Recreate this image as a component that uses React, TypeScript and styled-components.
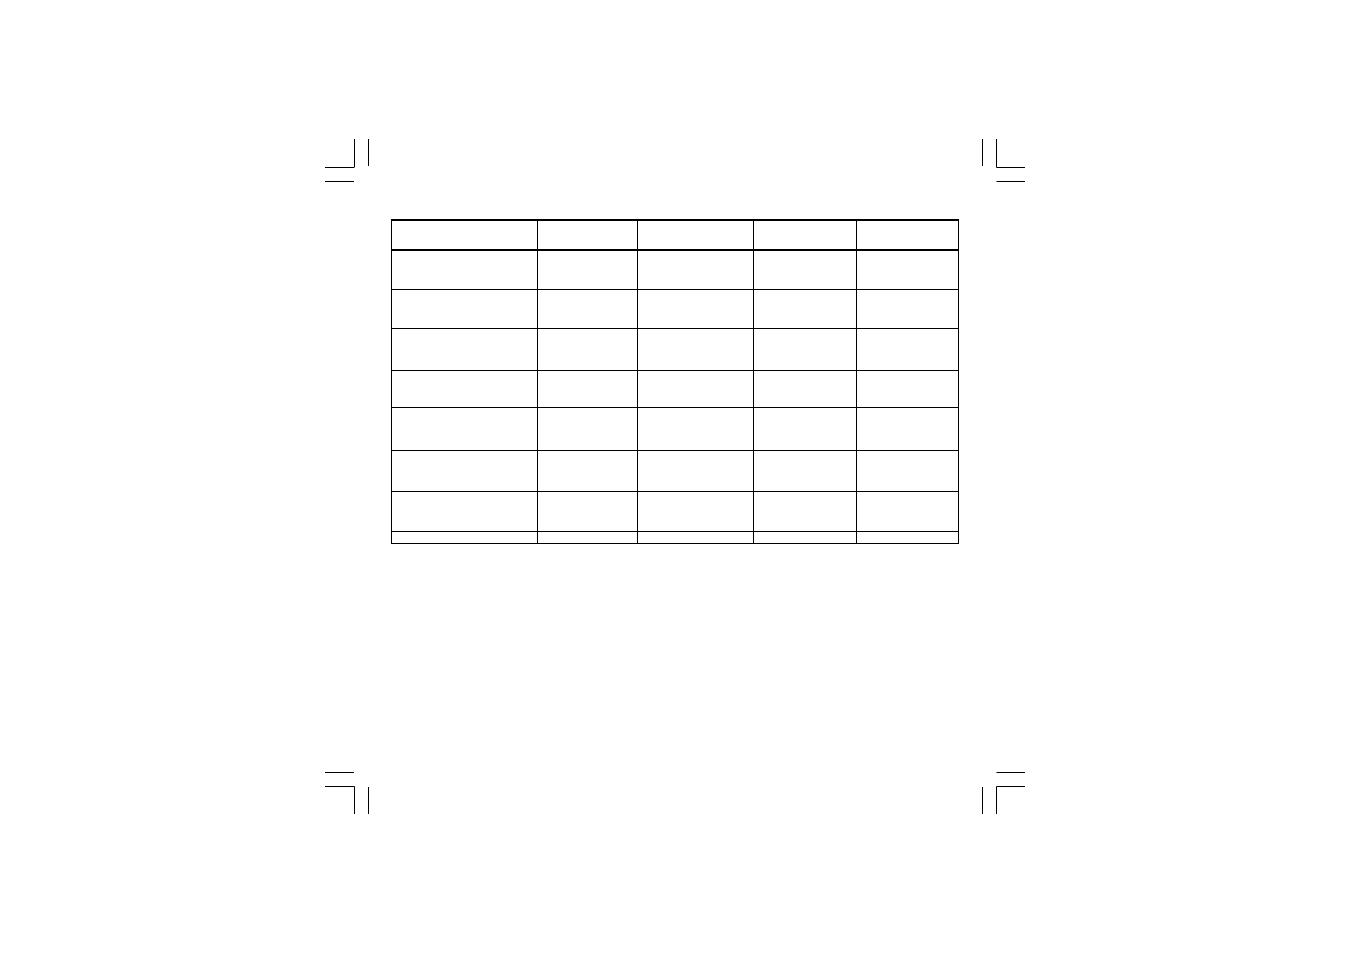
import React from 'react';
import styled, { createGlobalStyle } from 'styled-components';

const GlobalStyle = createGlobalStyle`
  html, body {
    margin: 0;
    padding: 0;
    background: #fff;
    font-family: "Liberation Sans", Arial, sans-serif;
  }
`;

const columns = [146, 100, 116, 103, 102];
const rowHeights = [39, 39, 42, 37, 43, 41, 40, 12];

type Corner = 'tl' | 'tr' | 'bl' | 'br';

// line segments of each crop mark, inside a 46x45 box
const marks: Record<Corner, number[][]> = {
  tl: [
    [1, 29.5, 30, 29.5],
    [30.5, 1, 30.5, 29.5],
    [44.5, 1, 44.5, 28],
    [1, 43.5, 30, 43.5],
  ],
  tr: [
    [1.5, 1, 1.5, 28],
    [15.5, 1, 15.5, 29.5],
    [15.5, 29.5, 44, 29.5],
    [15.5, 43.5, 44, 43.5],
  ],
  bl: [
    [1, 1.5, 30, 1.5],
    [1, 15.5, 30.5, 15.5],
    [30.5, 15.5, 30.5, 43],
    [44.5, 16, 44.5, 43],
  ],
  br: [
    [15.5, 1.5, 44, 1.5],
    [15.5, 15.5, 44, 15.5],
    [15.5, 15.5, 15.5, 43],
    [1.5, 16, 1.5, 43],
  ],
};

const CropMark = ({ corner }: { corner: Corner }) => (
  <MarkSvg width="46" height="45" viewBox="0 0 46 45">
    {marks[corner].map(([x1, y1, x2, y2], i) => (
      <line key={i} x1={x1} y1={y1} x2={x2} y2={y2} stroke="#000" strokeWidth="1" />
    ))}
  </MarkSvg>
);

const App = () => (
  <Page>
    <GlobalStyle />
    <Frame>
      <MarkRow>
        <CropMark corner="tl" />
        <CropMark corner="tr" />
      </MarkRow>
      <Body>
        <Grid>
          <colgroup>
            {columns.map((w, i) => (
              <col key={i} style={{ width: w }} />
            ))}
          </colgroup>
          <thead>
            <tr>
              {columns.map((_, i) => (
                <HeadCell key={i} />
              ))}
            </tr>
          </thead>
          <tbody>
            {rowHeights.map((h, r) => (
              <tr key={r} style={{ height: h }}>
                {columns.map((_, c) => (
                  <Cell key={c} />
                ))}
              </tr>
            ))}
          </tbody>
        </Grid>
      </Body>
      <MarkRow>
        <CropMark corner="bl" />
        <CropMark corner="br" />
      </MarkRow>
    </Frame>
  </Page>
);

const Page = styled.div`
  width: 1351px;
  height: 954px;
  box-sizing: border-box;
  padding: 138px 0 0 324px;
  background: #fff;
`;

const Frame = styled.div`
  display: grid;
  grid-template-rows: 45px 1fr 45px;
  width: 703px;
  height: 678px;
`;

const MarkRow = styled.div`
  display: flex;
  justify-content: space-between;
`;

const Body = styled.div`
  padding: 36px 0 0 67px;
`;

const MarkSvg = styled.svg`
  display: block;
`;

const Grid = styled.table`
  border-collapse: separate;
  border-spacing: 0;
  table-layout: fixed;
  width: 568px;
  border-top: 2px solid #000;
  border-left: 1px solid #000;
`;

const Cell = styled.td`
  box-sizing: border-box;
  padding: 0;
  border-right: 1px solid #000;
  border-bottom: 1px solid #000;
`;

const HeadCell = styled.th`
  box-sizing: border-box;
  height: 30px;
  padding: 0;
  border-right: 1px solid #000;
  border-bottom: 2px solid #000;
`;

export default App;
